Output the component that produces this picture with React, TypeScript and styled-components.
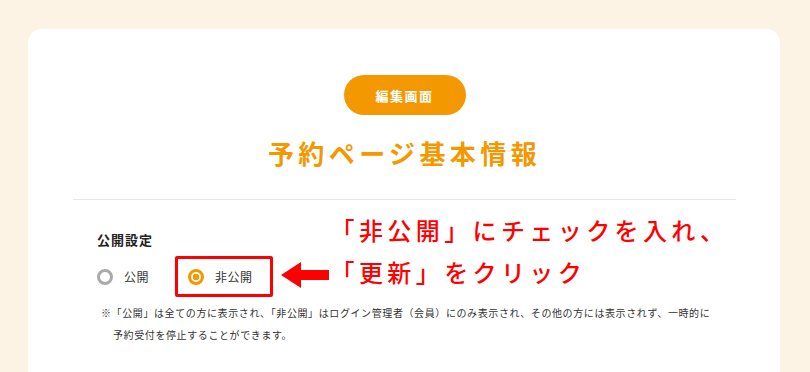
import React from 'react'
import styled, { createGlobalStyle } from 'styled-components'

const GlobalStyle = createGlobalStyle`
    html, body {
        margin: 0;
        padding: 0;
        background: #fdf3e5;
    }

    body {
        font-family: "Noto Sans CJK JP", "Noto Sans", sans-serif;
        color: #333;
        overflow: hidden;
    }
`

const Page = styled.div`
    width: 810px;
    height: 372px;
    padding: 29px 30px 0 28px;
    box-sizing: border-box;
`

const Card = styled.div`
    background: #fff;
    border-radius: 14px 14px 0 0;
    height: 343px;
    padding: 46px 44px 0 45px;
    box-sizing: border-box;

    display: flex;
    flex-direction: column;
    align-items: center;
`

const Badge = styled.div`
    width: 122px;
    height: 40px;
    border-radius: 20px;
    background: #f39800;
    color: #fff;

    display: flex;
    align-items: center;
    justify-content: center;

    font-size: 13px;
    font-weight: bold;
    letter-spacing: 1.5px;
`

const Title = styled.h1`
    margin: 20px 0 0;
    font-size: 26px;
    line-height: 36px;
    font-weight: bold;
    letter-spacing: 4.4px;
    color: #f39800;
`

const Divider = styled.hr`
    width: 100%;
    margin: 28px 0 0;
    border: none;
    border-top: 1px solid #e8e8e8;
`

const Section = styled.div`
    width: 100%;
    padding: 0 24px;
    box-sizing: border-box;
`

const FormRow = styled.div`
    margin-top: 9px;
    display: flex;
    align-items: flex-end;
`

const Field = styled.div`
    flex-shrink: 0;
    display: flex;
    flex-direction: column;
`

const Label = styled.div`
    font-size: 13px;
    line-height: 20px;
    font-weight: bold;
    letter-spacing: 1px;
    color: #222;
`

const Options = styled.div`
    margin-top: 6px;
    display: flex;
    align-items: center;
`

const Option = styled.label<{ $marked?: boolean }>`
    height: 41px;
    box-sizing: border-box;
    display: flex;
    align-items: center;
    gap: 11px;
    padding: ${p => (p.$marked ? '0 17px 0 10px' : '0 26px 0 0')};
    border: ${p => (p.$marked ? '3px solid #f00' : 'none')};
    border-radius: 2px;
    white-space: nowrap;

    font-size: 12px;
    letter-spacing: 0.5px;
    color: #333;
`

const Radio = styled.span<{ $checked?: boolean }>`
    width: 16px;
    height: 16px;
    flex-shrink: 0;
    box-sizing: border-box;
    border-radius: 50%;
    border: 3px solid ${p => (p.$checked ? '#f39800' : '#aaa')};
    background: ${p =>
        p.$checked
            ? 'radial-gradient(circle, #f39800 0 3px, #fff 3.6px)'
            : '#fff'};
`

const Arrow = styled.svg`
    width: 48px;
    height: 26px;
    margin: 0 0 9px 8px;
    flex-shrink: 0;
`

const Callout = styled.div`
    margin: 0 0 4px 2px;
    font-size: 24px;
    line-height: 42px;
    font-weight: 500;
    letter-spacing: 4.4px;
    color: #f00;
    white-space: nowrap;
`

const Note = styled.p`
    margin: 5px 0 0;
    padding-left: 16px;
    text-indent: -12px;
    font-size: 10px;
    line-height: 21.5px;
    letter-spacing: 0.6px;
    color: #333;
`

function App() {
    return (
        <Page>
            <GlobalStyle />
            <Card>
                <Badge>編集画面</Badge>
                <Title>予約ページ基本情報</Title>
                <Divider />
                <Section>
                    <FormRow>
                        <Field>
                            <Label>公開設定</Label>
                            <Options>
                                <Option>
                                    <Radio />
                                    公開
                                </Option>
                                <Option $marked>
                                    <Radio $checked />
                                    非公開
                                </Option>
                            </Options>
                        </Field>
                        <Arrow viewBox="0 0 48 26">
                            <polygon points="0,13 20,0 20,8 48,8 48,18 20,18 20,26" fill="#f00" />
                        </Arrow>
                        <Callout>
                            「非公開」にチェックを入れ、
                            <br />
                            「更新」をクリック
                        </Callout>
                    </FormRow>
                    <Note>
                        ※「公開」は全ての方に表示され、「非公開」はログイン管理者（会員）にのみ表示され、その他の方には表示されず、一時的に予約受付を停止することができます。
                    </Note>
                </Section>
            </Card>
        </Page>
    )
}

export default App
